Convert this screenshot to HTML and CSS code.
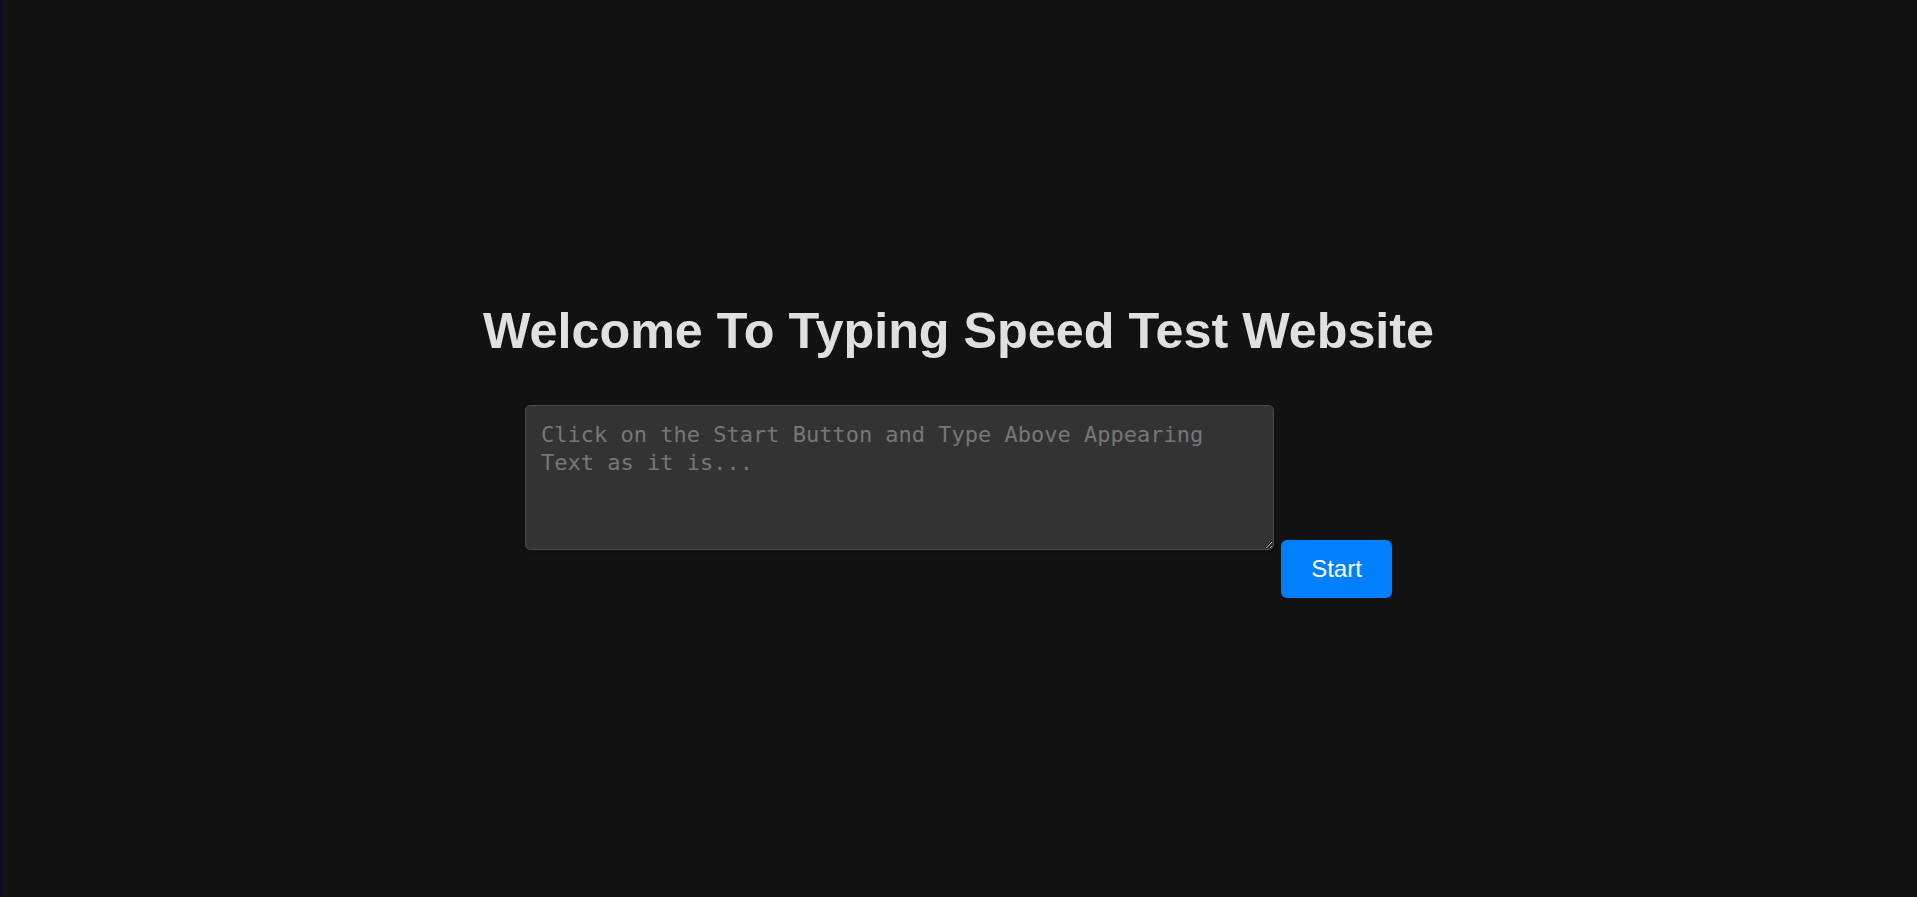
FILE: index.html
```html
<!DOCTYPE html>
<html lang="en">
<head>
<meta charset="UTF-8">
<title>Typing Speed Test</title>
<link rel="stylesheet" href="styles.css">
</head>
<body>
  <main class="app">
    <h1 class="title">Welcome To Typing Speed Test Website</h1>
    <div class="typing-row">
      <textarea class="typing-box" placeholder="Click on the Start Button and Type Above Appearing Text as it is..."></textarea>
      <button class="start-btn" type="button">Start</button>
    </div>
  </main>
</body>
</html>
```

FILE: styles.css
```css
html, body {
  margin: 0;
  padding: 0;
}

body {
  background: #121212;
  min-height: 100vh;
  font-family: "Liberation Sans", Arial, sans-serif;
  box-shadow: inset 1px 0 0 #0c0c26;
}

.app {
  box-sizing: border-box;
  min-height: 100vh;
  padding-top: 4px;
  display: flex;
  flex-direction: column;
  align-items: center;
  justify-content: center;
}

.title {
  margin: 0 0 46px;
  font-size: 50.3px;
  line-height: 56px;
  font-weight: bold;
  color: #e0e0e0;
  text-align: center;
}

.typing-row {
  display: flex;
  align-items: flex-start;
  gap: 7px;
}

.typing-box {
  box-sizing: border-box;
  width: 749px;
  height: 145px;
  margin: 0;
  padding: 15px 15px 15px;
  background: #333333;
  border: 1px solid #4a4a4a;
  border-radius: 5px;
  box-shadow: 0 2px 4px rgba(0, 0, 0, 0.35);
  color: #dddddd;
  font-family: "DejaVu Sans Mono", "Liberation Mono", monospace;
  font-size: 22px;
  line-height: 28px;
  resize: both;
  outline: none;
}

.typing-box::placeholder {
  color: #777777;
}

.start-btn {
  margin-top: 135px;
  box-sizing: border-box;
  width: 111px;
  height: 58px;
  padding: 0;
  background: #0080ff;
  color: #ffffff;
  border: none;
  border-radius: 6px;
  font-family: "Liberation Sans", Arial, sans-serif;
  font-size: 24px;
  cursor: pointer;
}
```
